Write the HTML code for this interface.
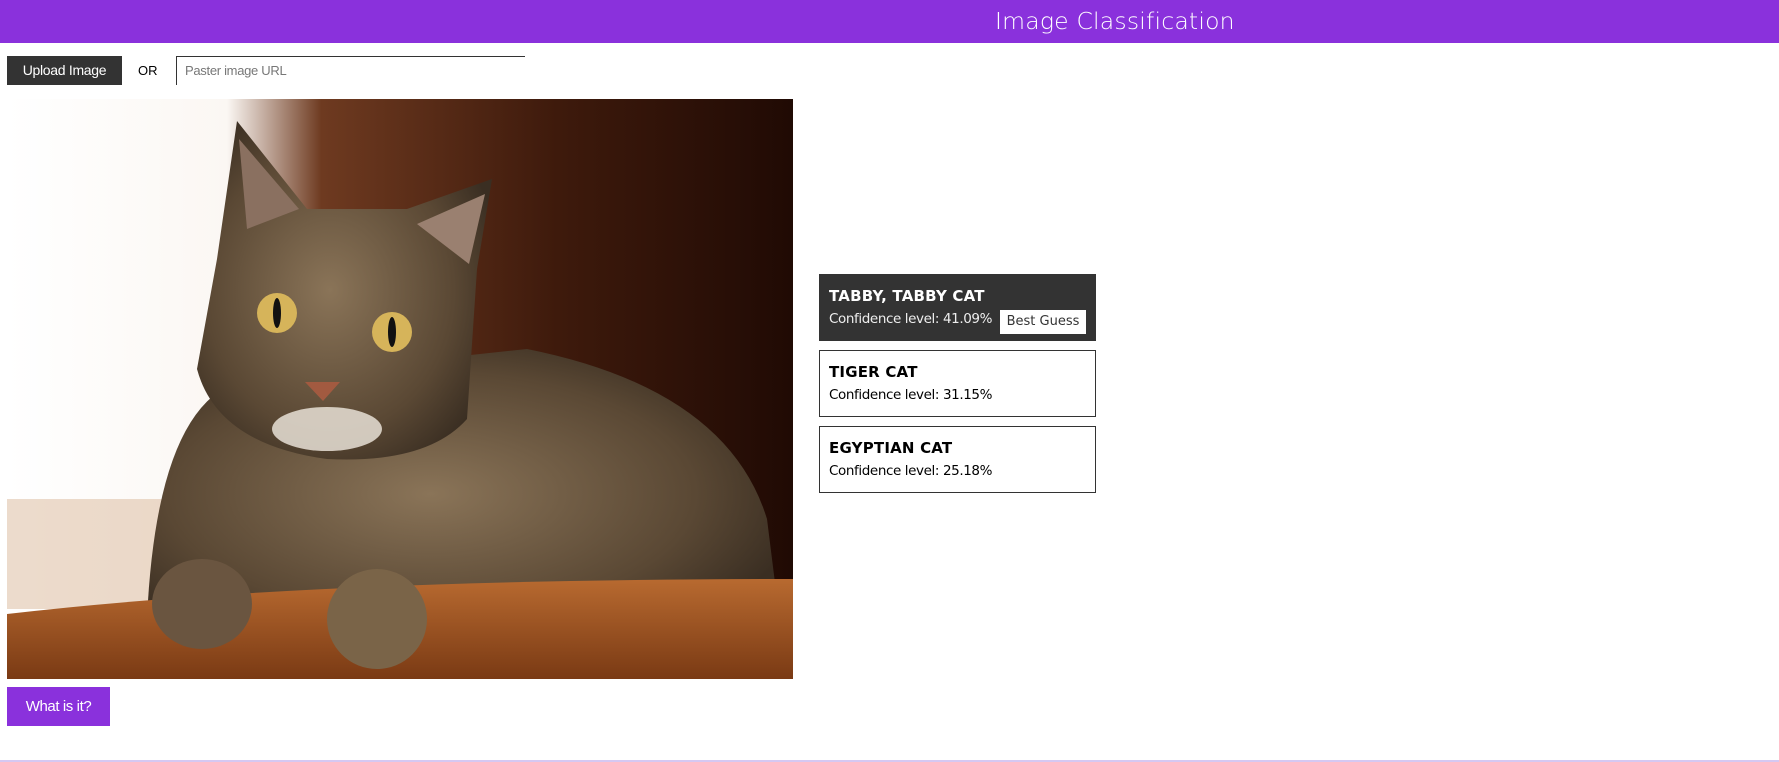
<!DOCTYPE html>
<html><head><meta charset="utf-8"><style>
*{margin:0;padding:0;box-sizing:border-box}
body{width:1779px;height:762px;background:#fff;position:relative;overflow:hidden;font-family:"Liberation Sans",sans-serif}
.hdr{position:absolute;left:0;top:0;width:1779px;height:43px;background:#8a31dc}
.hdr span{position:absolute;left:995px;top:7px;color:#fff;font-size:23.5px;letter-spacing:0.2px;font-family:"DejaVu Sans","Liberation Sans",sans-serif;font-weight:300}
.up{position:absolute;left:7px;top:56px;width:115px;height:29px;background:#333;color:#fff;font-size:14px;line-height:29px;text-align:center;letter-spacing:-0.3px}
.or{position:absolute;left:138px;top:63px;font-size:13px;color:#000}
.inp{position:absolute;left:176px;top:56px;width:349px;height:29px;border-top:1px solid #333;border-left:1px solid #333;color:#777;font-size:13px;padding:6px 8px;letter-spacing:-0.3px}
.img{position:absolute;left:7px;top:99px;width:786px;height:580px}
.card{position:absolute;left:819px;width:277px;height:67px;border:1px solid #333;padding:12px 9px;font-family:"DejaVu Sans","Liberation Sans",sans-serif}
.card b{display:block;font-size:15px;font-weight:bold;letter-spacing:0.2px}
.card i{font-style:normal;display:block;font-size:13.5px;margin-top:6px;letter-spacing:-0.4px;color:#000}
.dark{background:#333;color:#fff}
.dark i{color:#eee}
.bg{position:absolute;left:180px;top:35px;width:86px;height:24px;background:#fff;color:#333;font-size:13px;line-height:24px;text-align:center}
.btn{position:absolute;left:7px;top:687px;width:103px;height:39px;background:#8a31dc;color:#fff;font-size:15px;line-height:39px;text-align:center;letter-spacing:-0.4px}
.line{position:absolute;left:0;top:760px;width:1779px;height:2px;background:#d6c8f2}
</style></head><body>
<div class="hdr"><span>Image Classification</span></div>
<div class="up">Upload Image</div>
<div class="or">OR</div>
<div class="inp">Paster image URL</div>
<svg class="img" viewBox="0 0 786 580" xmlns="http://www.w3.org/2000/svg">
<defs>
<linearGradient id="bgg" x1="0" x2="1" y1="0" y2="0">
<stop offset="0" stop-color="#fff"/><stop offset="0.28" stop-color="#fbf7f3"/><stop offset="0.4" stop-color="#6e3a20"/><stop offset="0.7" stop-color="#3e1a0c"/><stop offset="1" stop-color="#200a04"/></linearGradient>
<radialGradient id="fur" cx="0.45" cy="0.5" r="0.6"><stop offset="0" stop-color="#8a7458"/><stop offset="0.7" stop-color="#5a4834"/><stop offset="1" stop-color="#3a2e22"/></radialGradient>
<linearGradient id="bl" x1="0" y1="0" x2="0" y2="1"><stop offset="0" stop-color="#b86a30"/><stop offset="1" stop-color="#7a3a14"/></linearGradient>
</defs>
<rect width="786" height="580" fill="url(#bgg)"/>
<rect x="0" y="400" width="180" height="110" fill="#d9b89a" opacity="0.5"/>
<path d="M140 520 Q150 300 240 280 L520 250 Q720 290 760 420 L770 500 L140 540 Z" fill="url(#fur)"/>
<path d="M210 160 L230 22 L300 110 L400 110 L485 80 L470 170 L460 320 Q420 365 320 360 Q210 345 190 270 Z" fill="url(#fur)"/>
<path d="M232 40 L292 110 L240 130 Z" fill="#8a7060"/>
<path d="M478 95 L410 125 L462 165 Z" fill="#9a8070"/>
<ellipse cx="320" cy="330" rx="55" ry="22" fill="#e8e0d6" opacity="0.85"/>
<circle cx="270" cy="214" r="20" fill="#d6b45a"/><ellipse cx="270" cy="214" rx="4" ry="15" fill="#111"/>
<circle cx="385" cy="233" r="20" fill="#d6b45a"/><ellipse cx="385" cy="233" rx="4" ry="15" fill="#111"/>
<path d="M298 283 L333 283 L316 302 Z" fill="#a25a40"/>
<path d="M0 515 Q300 480 786 480 L786 580 L0 580 Z" fill="url(#bl)"/>
<ellipse cx="195" cy="505" rx="50" ry="45" fill="#6a5540"/>
<ellipse cx="370" cy="520" rx="50" ry="50" fill="#7a6448"/>
</svg>
<div class="card dark" style="top:274px"><b>TABBY, TABBY CAT</b><i>Confidence level: 41.09%</i><div class="bg">Best Guess</div></div>
<div class="card" style="top:350px"><b>TIGER CAT</b><i>Confidence level: 31.15%</i></div>
<div class="card" style="top:426px"><b>EGYPTIAN CAT</b><i>Confidence level: 25.18%</i></div>
<div class="btn">What is it?</div>
<div class="line"></div>
</body></html>
